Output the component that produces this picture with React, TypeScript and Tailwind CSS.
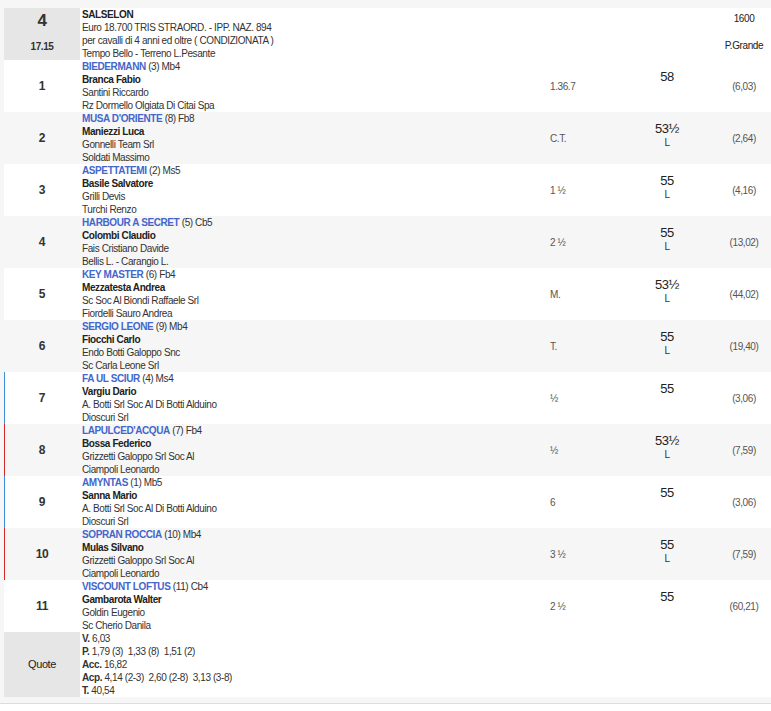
import React from "react";

type Row = {
  n: number;
  horse: string;
  extra: string;
  jockey: string;
  l3: string;
  l4: string;
  time: string;
  weight: string;
  L: boolean;
  odds: string;
  mark?: "blue" | "red";
};

const rows: Row[] = [
  { n: 1, horse: "BIEDERMANN", extra: "(3) Mb4", jockey: "Branca Fabio", l3: "Santini Riccardo", l4: "Rz Dormello Olgiata Di Citai Spa", time: "1.36.7", weight: "58", L: false, odds: "(6,03)" },
  { n: 2, horse: "MUSA D'ORIENTE", extra: "(8) Fb8", jockey: "Maniezzi Luca", l3: "Gonnelli Team Srl", l4: "Soldati Massimo", time: "C.T.", weight: "53½", L: true, odds: "(2,64)" },
  { n: 3, horse: "ASPETTATEMI", extra: "(2) Ms5", jockey: "Basile Salvatore", l3: "Grilli Devis", l4: "Turchi Renzo", time: "1 ½", weight: "55", L: true, odds: "(4,16)" },
  { n: 4, horse: "HARBOUR A SECRET", extra: "(5) Cb5", jockey: "Colombi Claudio", l3: "Fais Cristiano Davide", l4: "Bellis L. - Carangio L.", time: "2 ½", weight: "55", L: true, odds: "(13,02)" },
  { n: 5, horse: "KEY MASTER", extra: "(6) Fb4", jockey: "Mezzatesta Andrea", l3: "Sc Soc Al Biondi Raffaele Srl", l4: "Fiordelli Sauro Andrea", time: "M.", weight: "53½", L: true, odds: "(44,02)" },
  { n: 6, horse: "SERGIO LEONE", extra: "(9) Mb4", jockey: "Fiocchi Carlo", l3: "Endo Botti Galoppo Snc", l4: "Sc Carla Leone Srl", time: "T.", weight: "55", L: true, odds: "(19,40)" },
  { n: 7, horse: "FA UL SCIUR", extra: "(4) Ms4", jockey: "Vargiu Dario", l3: "A. Botti Srl Soc Al Di Botti Alduino", l4: "Dioscuri Srl", time: "½", weight: "55", L: false, odds: "(3,06)", mark: "blue" },
  { n: 8, horse: "LAPULCED'ACQUA", extra: "(7) Fb4", jockey: "Bossa Federico", l3: "Grizzetti Galoppo Srl Soc Al", l4: "Ciampoli Leonardo", time: "½", weight: "53½", L: true, odds: "(7,59)", mark: "red" },
  { n: 9, horse: "AMYNTAS", extra: "(1) Mb5", jockey: "Sanna Mario", l3: "A. Botti Srl Soc Al Di Botti Alduino", l4: "Dioscuri Srl", time: "6", weight: "55", L: false, odds: "(3,06)", mark: "blue" },
  { n: 10, horse: "SOPRAN ROCCIA", extra: "(10) Mb4", jockey: "Mulas Silvano", l3: "Grizzetti Galoppo Srl Soc Al", l4: "Ciampoli Leonardo", time: "3 ½", weight: "55", L: true, odds: "(7,59)", mark: "red" },
  { n: 11, horse: "VISCOUNT LOFTUS", extra: "(11) Cb4", jockey: "Gambarota Walter", l3: "Goldin Eugenio", l4: "Sc Cherio Danila", time: "2 ½", weight: "55", L: false, odds: "(60,21)" },
];

function RunnerRow({ r }: { r: Row }) {
  const bg = r.n % 2 === 0 ? "bg-[#f6f6f6]" : "bg-white";
  const mark =
    r.mark === "blue"
      ? "shadow-[inset_1px_0_0_#3f8fdc]"
      : r.mark === "red"
      ? "shadow-[inset_1px_0_0_#d22c2c]"
      : "";
  return (
    <div className={`flex h-[52px] ${bg} ${mark}`}>
      <div className="w-[76px] flex items-center justify-center text-[12px] font-bold text-[#333] tracking-[-0.3px]">
        {r.n}
      </div>
      <div className="flex-1 pl-[2px] leading-[13px]">
        <div>
          <span className="font-bold text-[#4466cc]">{r.horse}</span>{" "}
          <span>{r.extra}</span>
        </div>
        <div className="font-bold text-[#222]">{r.jockey}</div>
        <div>{r.l3}</div>
        <div>{r.l4}</div>
      </div>
      <div className="w-[69px] flex items-center pl-[2px] text-[#555]">{r.time}</div>
      <div className="w-[100px] flex flex-col items-center pt-[9px]">
        <div className="text-[13px] leading-[16px] text-[#222] tracking-[-0.5px]">{r.weight}</div>
        <div className="leading-[12px] text-[#333]">{r.L ? "L" : "\u00a0"}</div>
      </div>
      <div className="w-[54px] flex items-center justify-center text-[#555]">{r.odds}</div>
    </div>
  );
}

export default function App() {
  return (
    <div className="w-[771px] min-h-[711px] bg-white font-[family-name:Liberation_Sans,Arial,sans-serif] text-[10px] tracking-[-0.4px] text-[#333]">
      <div className="bg-[#f6f6f6] pt-[8px] pb-[6px] pl-[4px]">
        {/* header */}
        <div className="flex h-[52px] bg-white">
          <div className="w-[76px] bg-[#e6e6e6] flex flex-col items-center pt-[3px]">
            <div className="text-[17px] leading-[20px] font-bold text-[#333]">4</div>
            <div className="mt-[9px] leading-[13px] font-bold text-[#333]">17.15</div>
          </div>
          <div className="flex-1 pl-[2px] leading-[13px]">
            <div className="font-bold text-[#222]">SALSELON</div>
            <div>Euro 18.700 TRIS STRAORD. - IPP. NAZ. 894</div>
            <div>per cavalli di 4 anni ed oltre ( CONDIZIONATA )</div>
            <div>Tempo Bello - Terreno L.Pesante</div>
          </div>
          <div className="w-[69px]" />
          <div className="w-[100px]" />
          <div className="w-[54px] flex flex-col items-center pt-[4px] leading-[13px] text-[#222]">
            <div>1600</div>
            <div className="mt-[14px]">P.Grande</div>
          </div>
        </div>
        {rows.map((r) => (
          <RunnerRow key={r.n} r={r} />
        ))}
        {/* quote */}
        <div className="flex h-[65px] bg-white">
          <div className="w-[76px] bg-[#e6e6e6] flex items-center justify-center text-[11px] text-[#222]">
            Quote
          </div>
          <div className="flex-1 pl-[2px] leading-[13px] whitespace-pre">
            <div><b>V.</b> 6,03</div>
            <div><b>P.</b> 1,79 (3)  1,33 (8)  1,51 (2)</div>
            <div><b>Acc.</b> 16,82</div>
            <div><b>Acp.</b> 4,14 (2-3)  2,60 (2-8)  3,13 (3-8)</div>
            <div><b>T.</b> 40,54</div>
          </div>
        </div>
      </div>
      <div className="border-t border-[#dcdcdc]" />
    </div>
  );
}
